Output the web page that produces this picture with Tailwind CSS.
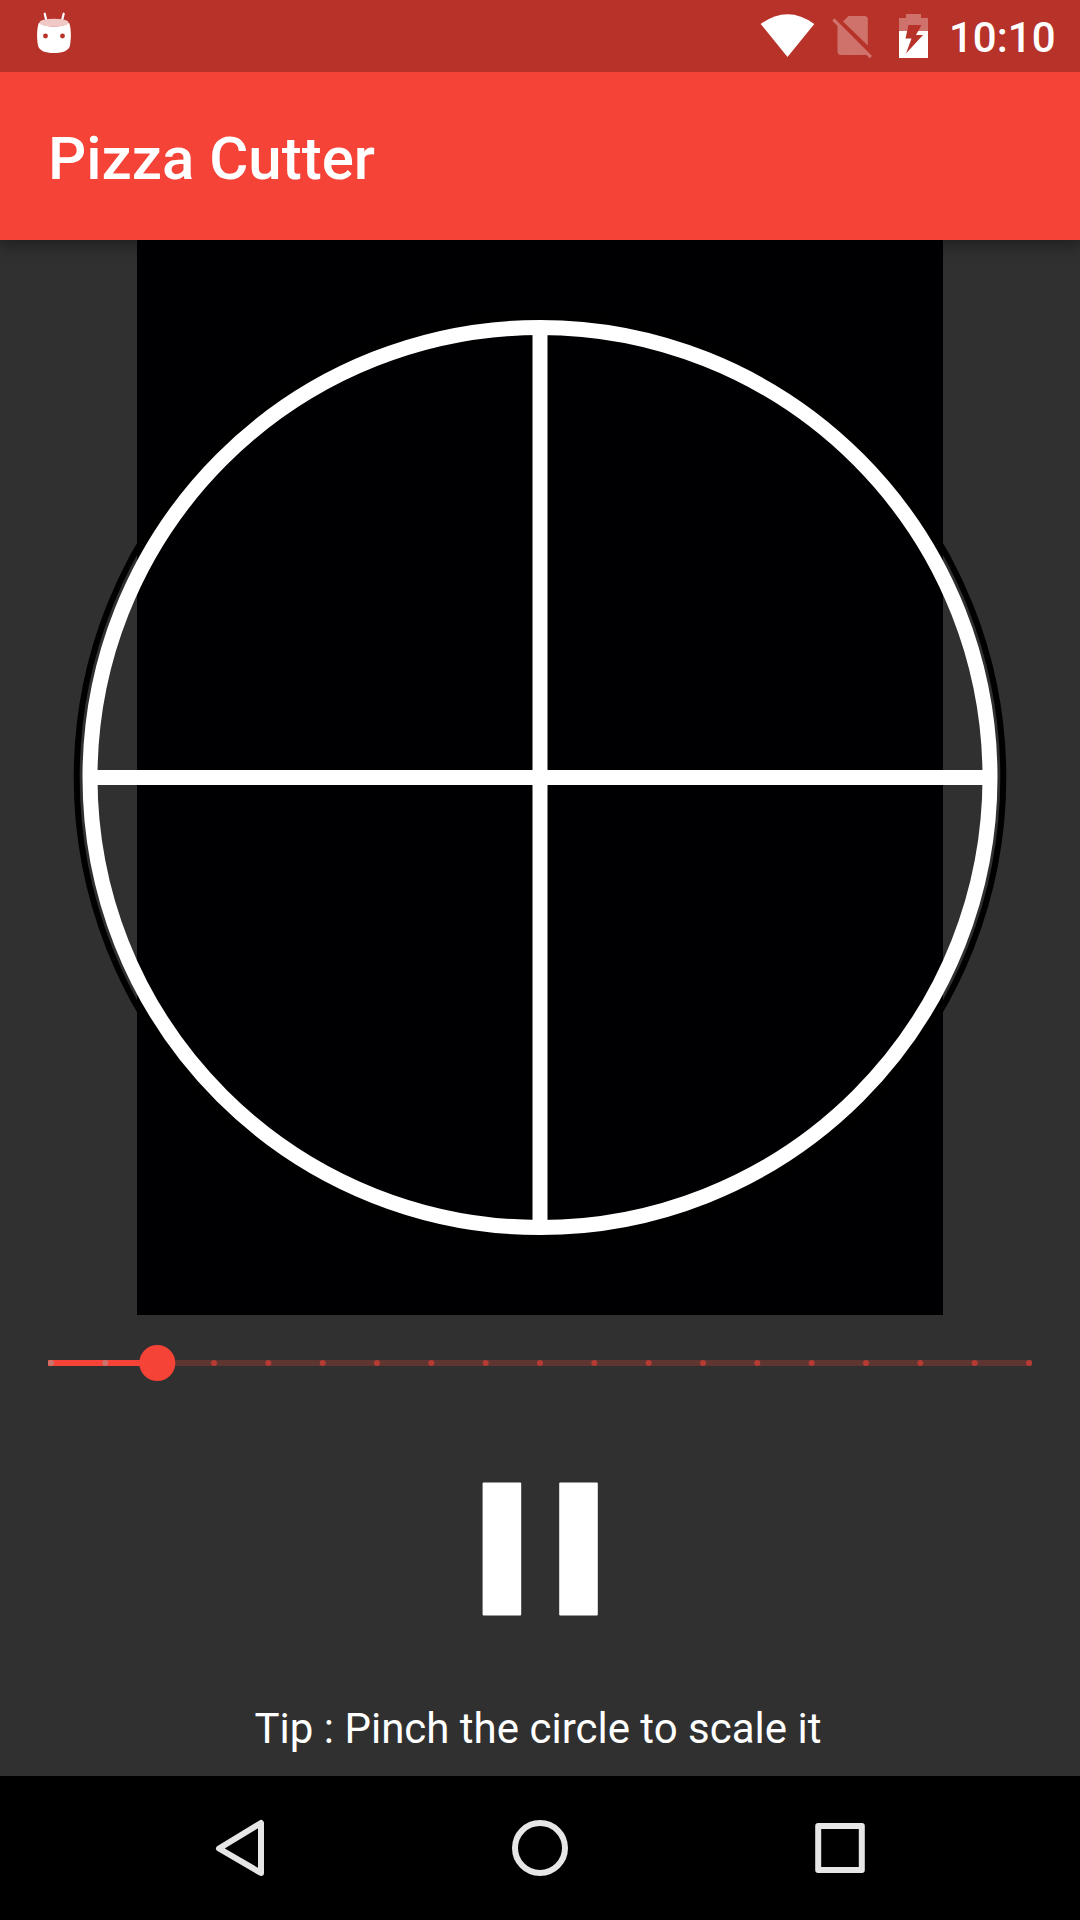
<!DOCTYPE html>
<html lang="en">
<head>
<meta charset="utf-8">
<title>Pizza Cutter</title>
<script src="https://cdn.jsdelivr.net/npm/@tailwindcss/browser@4"></script>
</head>
<body class="bg-[#303030]">
<div class="relative flex h-[1920px] w-[1080px] flex-col overflow-hidden bg-[#303030] font-['Roboto',sans-serif] text-white">
  <header class="relative z-10 shadow-[0_6px_14px_rgba(0,0,0,0.35)]">
    <div class="flex h-[72px] items-center justify-between bg-[#b73229] pl-9 pr-6">
      <svg class="h-[72px] w-9" viewBox="36 0 36 72">
        <path d="M44.700 13.700l2 8M63.700 13.700l-2 8" stroke="#fff" stroke-width="2.200" stroke-linecap="round"/>
        <path d="M39 22.500C45 28 63 28 69 22.500C71 27 71.500 37 70 45.500C69 50.500 63 53 54 53S39 50.500 38 45.500C36.500 37 37 27 39 22.500Z" fill="#fff"/>
        <ellipse cx="54" cy="22.700" rx="14.500" ry="4" fill="#f0c9c7"/>
        <circle cx="45.500" cy="36" r="2.400" fill="#b73229"/><circle cx="62.500" cy="36" r="2.400" fill="#b73229"/>
      </svg>
      <div class="flex items-center">
        <svg class="h-[72px] w-[191px]" viewBox="757 0 191 72">
          <path d="M760.700 24Q787.500 4.500 814.300 24L787.500 57Z" fill="#fff"/>
          <g fill="#cf726c">
            <path d="M848.500 16H864.500Q867.800 16 867.800 19.500V45.500L843 21.500Z"/>
            <path d="M837.500 24.500L867 54.300Q866 55 864.500 55H841Q837.500 55 837.500 51Z"/>
            <path d="M834.500 18.300L872 56L869.700 58.200L832.300 20.800Z"/>
            <path d="M899 31V18H906V14H921V18H928V31Z"/>
          </g>
          <path d="M899 31H928V58H899Z" fill="#fff"/>
          <path d="M908.500 25H921.500L916 35H923L906 53.500L911.500 38.500H905.500Z" fill="#b73229"/>
        </svg>
        <span class="w-[108px] pt-1 pl-px text-[42px] leading-[48px] font-medium">10:10</span>
      </div>
    </div>
    <div class="flex h-[168px] items-center bg-[#f54337] pl-12">
      <h1 class="pt-[5px] text-[60px] leading-[70px] font-medium">Pizza Cutter</h1>
    </div>
  </header>

  <main class="flex h-[1536px] flex-col items-center">
    <section class="h-[1075px] w-full">
      <svg class="h-full w-full" viewBox="0 240 1080 1075" fill="none">
        <rect x="137" y="240" width="806" height="1075" fill="#000003"/>
        <circle cx="540" cy="777.500" r="463.300" stroke="#000" stroke-width="6"/>
        <circle cx="540" cy="777.500" r="450" stroke="#fff" stroke-width="15"/>
        <path d="M540 325V1230M90 777.500H990" stroke="#fff" stroke-width="15"/>
      </svg>
    </section>
    <svg class="h-24 w-full" viewBox="0 1315 1080 96">
      <path d="M157 1363H1032" stroke="#5f3532" stroke-width="6"/>
      <path d="M48 1363H157" stroke="#f54337" stroke-width="6"/>
      <path d="M51 1363h.01M105.330 1363h.01" stroke="#c9736d" stroke-width="6" stroke-linecap="round"/>
      <path d="M214 1363H1030" stroke="#b63b33" stroke-width="6" stroke-linecap="round" stroke-dasharray="0.010 54.323"/>
      <circle cx="157.300" cy="1363" r="18" fill="#f54337"/>
    </svg>
    <button class="mt-[71px] h-[134px] w-[116px]" aria-label="Pause">
      <svg class="h-full w-full" viewBox="482 1482 116 134" fill="#fff">
        <rect x="482.600" y="1482.400" width="38.600" height="133" rx="1"/>
        <rect x="559.200" y="1482.400" width="38.600" height="133" rx="1"/>
      </svg>
    </button>
    <p class="mt-[88px] pr-1 text-[42px] leading-[50px]">Tip : Pinch the circle to scale it</p>
  </main>

  <nav class="h-36 bg-black">
    <svg class="h-full w-full" viewBox="0 1776 1080 144" fill="none" stroke="#e6e6e6" stroke-width="6" stroke-linejoin="round">
      <path d="M261 1823V1873L219 1848.500Z"/>
      <circle cx="540" cy="1848" r="25"/>
      <rect x="818.200" y="1826" width="43.600" height="44"/>
    </svg>
  </nav>
</div>
</body>
</html>
